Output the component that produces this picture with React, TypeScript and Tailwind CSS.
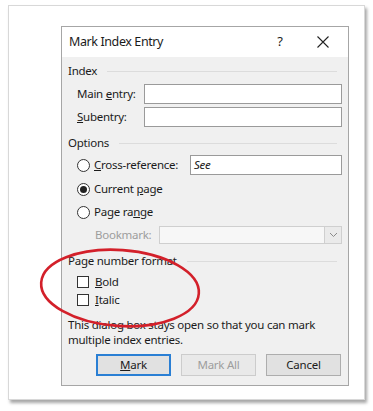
import React from "react";

const font = { fontFamily: '"Noto Sans", "Segoe UI", sans-serif' };

function Heading({ label }: { label: string }) {
  return (
    <div className="flex h-[16px] items-center gap-[10px] pr-[5px]">
      <span>{label}</span>
      <div className="h-px flex-1 bg-[#dcdcdc]" />
    </div>
  );
}

function Radio({ checked }: { checked?: boolean }) {
  return (
    <span className="flex h-[13px] w-[13px] items-center justify-center rounded-full border border-[#333] bg-white">
      {checked && <span className="h-[7px] w-[7px] rounded-full bg-[#222]" />}
    </span>
  );
}

function Checkbox() {
  return <span className="h-[12px] w-[12px] border border-[#333] bg-white" />;
}

export default function App() {
  return (
    <div className="h-[411px] w-[373px] bg-white pl-[8px] pt-[5px]" style={font}>
      <div className="relative h-[395px] w-[357px] border border-[#d8d8d8] bg-white pl-[52px] pt-[20px] shadow-[2px_3px_3px_rgba(0,0,0,0.35)]">
        <div className="flex h-[360px] w-[288px] flex-col border border-[#a6a6a6] text-[11.5px] tracking-[-0.25px] text-[#1b1b1b]">
          {/* Title bar */}
          <div className="flex h-[30px] items-center bg-white pl-[7px]">
            <span className="flex-1 text-[12.5px] tracking-[-0.4px]">Mark Index Entry</span>
            <span className="w-[12px] text-center text-[13px]">?</span>
            <svg width="14" height="14" viewBox="0 0 14 14" className="ml-[30px] mr-[18px]">
              <path d="M1.5 1.5L12.5 12.5M12.5 1.5L1.5 12.5" stroke="#222" strokeWidth="1.1" />
            </svg>
          </div>

          {/* Body */}
          <div className="flex flex-1 flex-col bg-[#f0f0f0] pl-[6px] pr-[6px]">
            <div className="mt-[6px]">
              <Heading label="Index" />
            </div>
            <div className="mt-[5px] flex h-[20px] items-center pl-[9px]">
              <span className="w-[67px]">
                Main <u>e</u>ntry:
              </span>
              <div className="h-[20px] flex-1 border border-[#9a9a9a] bg-white" />
            </div>
            <div className="mt-[3px] flex h-[20px] items-center pl-[9px]">
              <span className="w-[67px]">
                <u>S</u>ubentry:
              </span>
              <div className="h-[20px] flex-1 border border-[#9a9a9a] bg-white" />
            </div>

            <div className="mt-[8px]">
              <Heading label="Options" />
            </div>
            <div className="mt-[4px] flex h-[20px] items-center pl-[9px]">
              <Radio />
              <span className="ml-[4px] w-[96px]">
                <u>C</u>ross-reference:
              </span>
              <div className="flex h-[20px] flex-1 items-center border border-[#9a9a9a] bg-white pl-[3px] italic">
                See
              </div>
            </div>
            <div className="mt-[5px] flex h-[18px] items-center pl-[9px]">
              <Radio checked />
              <span className="ml-[4px]">
                Current <u>p</u>age
              </span>
            </div>
            <div className="mt-[5px] flex h-[18px] items-center pl-[9px]">
              <Radio />
              <span className="ml-[4px]">
                Page ra<u>n</u>ge
              </span>
            </div>
            <div className="mt-[5px] flex h-[18px] items-center pl-[27px]">
              <span className="w-[64px] text-[#9d9d9d]">Bookmark:</span>
              <div className="flex h-[18px] flex-1 items-center justify-end border border-[#cfcfcf] bg-[#f7f7f7]">
                <div className="flex h-[16px] w-[17px] items-center justify-center border-l border-[#cfcfcf] bg-[#eaeaea]">
                  <svg width="9" height="6" viewBox="0 0 9 6">
                    <path d="M1 1L4.5 4.5L8 1" fill="none" stroke="#8a8a8a" strokeWidth="1" />
                  </svg>
                </div>
              </div>
            </div>

            <div className="mt-[9px]">
              <Heading label="Page number format" />
            </div>
            <div className="mt-[5px] flex h-[16px] items-center pl-[9px]">
              <Checkbox />
              <span className="ml-[6px]">
                <u>B</u>old
              </span>
            </div>
            <div className="mt-[2px] flex h-[16px] items-center pl-[9px]">
              <Checkbox />
              <span className="ml-[6px]">
                <u>I</u>talic
              </span>
            </div>

            <p className="mt-[9px] leading-[15px]">
              This dialog box stays open so that you can mark
              <br />
              multiple index entries.
            </p>

            <div className="mt-[7px] flex h-[22px] gap-[10px] pl-[28px]">
              <button className="w-[75px] border-2 border-[#2a7fd4] bg-[#e1e1e1]">
                <u>M</u>ark
              </button>
              <button className="w-[75px] border border-[#cccccc] bg-[#e9e9e9] text-[#9d9d9d]">Mark All</button>
              <button className="w-[75px] border border-[#adadad] bg-[#e1e1e1]">Cancel</button>
            </div>
          </div>
        </div>

        {/* Red annotation circle */}
        <svg className="pointer-events-none absolute left-[26px] top-[236px]" width="172" height="92" viewBox="0 0 172 92">
          <ellipse cx="85" cy="46" rx="79" ry="38" fill="none" stroke="#d3202a" strokeWidth="2.6" transform="rotate(4 85 46)" />
        </svg>
      </div>
    </div>
  );
}
